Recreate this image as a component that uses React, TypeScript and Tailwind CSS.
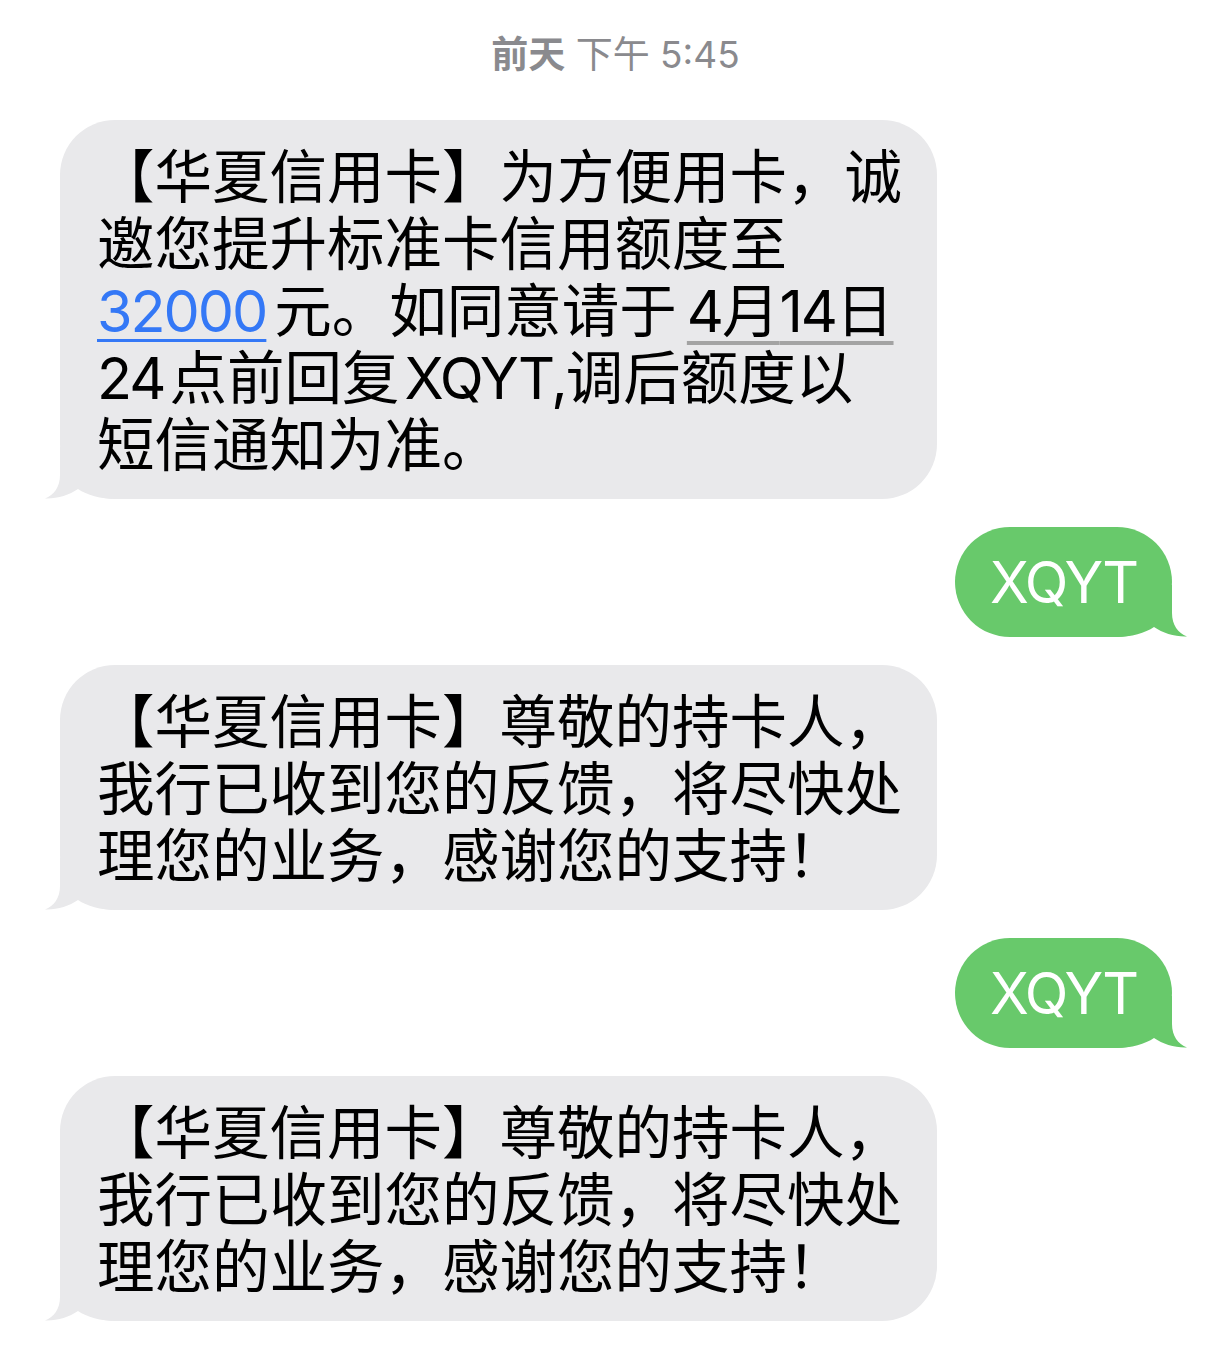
import React from "react";

const font = {
  fontFamily: 'Inter, "Noto Sans CJK SC", sans-serif',
};

const tail =
  "M15 8 L15 36 C15 48 9 56 0 59.5 C12 60 24 56 33 50 C42 56 55 60 72 60 L72 8 Z";

function TailLeft({ color }: { color: string }) {
  return (
    <svg
      className="absolute left-[-15px] bottom-0"
      width="75"
      height="60"
      viewBox="0 0 75 60"
    >
      <path d={tail} fill={color} />
    </svg>
  );
}

function TailRight({ color }: { color: string }) {
  return (
    <svg
      className="absolute right-[-15px] bottom-0 -scale-x-100"
      width="75"
      height="60"
      viewBox="0 0 75 60"
    >
      <path d={tail} fill={color} />
    </svg>
  );
}

// latin runs are a little tighter than the CJK text around them
function L({ children }: { children: React.ReactNode }) {
  return (
    <span className="tracking-[-0.035em] [word-spacing:-9px]">{children}</span>
  );
}

function Received({ lines }: { lines: React.ReactNode[] }) {
  return (
    <div className="flex justify-start">
      <div className="relative w-[877px] rounded-[55px] bg-[#e9e9eb] pl-[37px] pr-[30px] pt-[24px] pb-[20px]">
        <TailLeft color="#e9e9eb" />
        <div className="relative text-[57.5px] leading-[67px] text-black">
          {lines.map((l, i) => (
            <div key={i} className="whitespace-nowrap">
              {l}
            </div>
          ))}
        </div>
      </div>
    </div>
  );
}

function Sent({ text }: { text: string }) {
  return (
    <div className="flex justify-end">
      <div className="relative flex h-[110px] w-[217px] items-center justify-center rounded-[55px] bg-[#68c96b]">
        <TailRight color="#68c96b" />
        <span className="relative text-[57px] leading-[67px] tracking-[-0.035em] text-white">
          {text}
        </span>
      </div>
    </div>
  );
}

export default function App() {
  const reply = [
    "【华夏信用卡】尊敬的持卡人，",
    "我行已收到您的反馈，将尽快处",
    "理您的业务，感谢您的支持！",
  ];

  return (
    <div className="min-h-[1360px] w-[1231px] bg-white" style={font}>
      <div className="pt-[33px] text-center text-[37px] leading-[44px] text-[#8a8a8e]">
        <span className="font-semibold">前天</span> 下午 5:45
      </div>

      <div className="mt-[43px] flex flex-col gap-[28px] pl-[60px] pr-[59px]">
        <Received
          lines={[
            "【华夏信用卡】为方便用卡，诚",
            "邀您提升标准卡信用额度至",
            <>
              <span className="mr-[8px] text-[#3478f6] underline decoration-[3px] underline-offset-[7px] tracking-[-0.035em]">
                32000
              </span>
              元。如同意请于
              <span className="ml-[10px] underline decoration-[#a3a3a3] decoration-[4px] underline-offset-[9px]">
                <L>4</L>月<L>14</L>日
              </span>
            </>,
            <>
              <L>24 </L>点前回复<L> XQYT,</L>调后额度以
            </>,
            "短信通知为准。",
          ]}
        />
        <Sent text="XQYT" />
        <Received lines={reply} />
        <Sent text="XQYT" />
        <Received lines={reply} />
      </div>
    </div>
  );
}
